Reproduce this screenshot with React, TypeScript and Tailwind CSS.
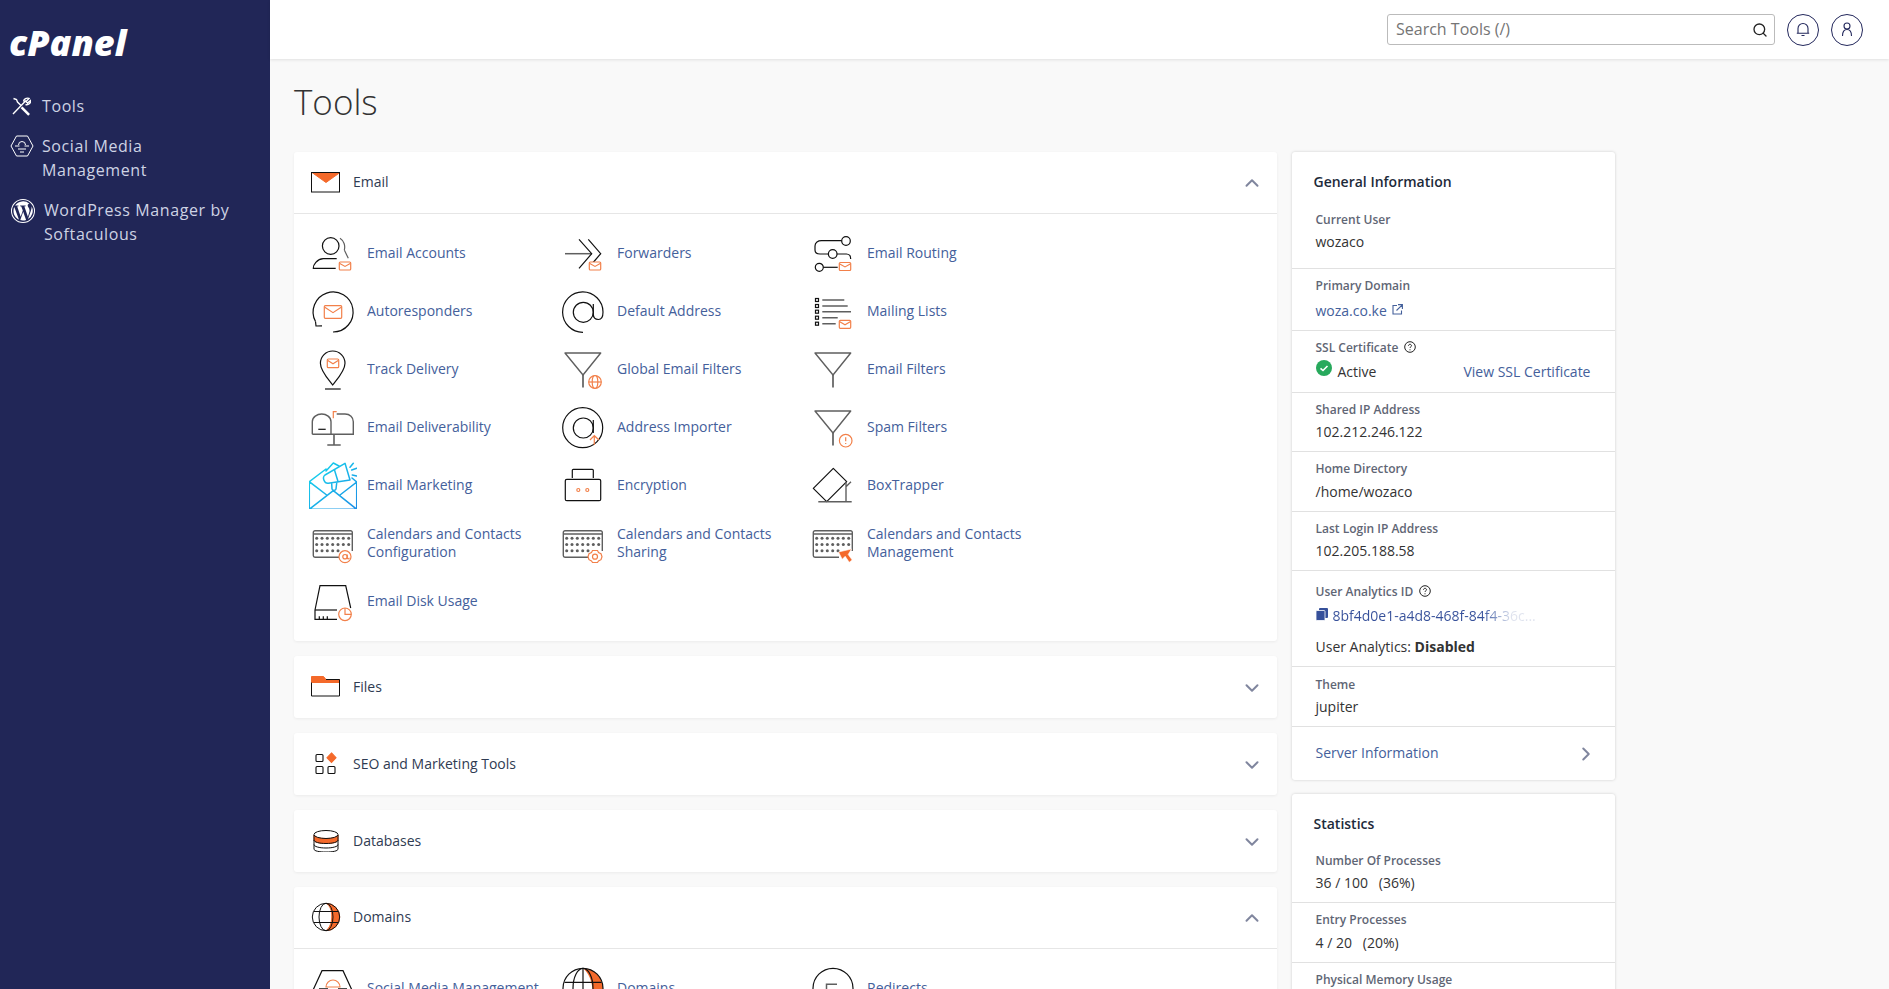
import React from 'react';
import { ChevronDown, ChevronRight, ChevronUp, Search } from 'lucide-react';

const INK = '#111111';
const GREY = '#5f5f5f';
const ORANGE = '#f2804a';
const SOLID = '#f4692a';

// little envelope that sits on the bottom right corner of a lot of the icons
const MiniMail = ({ x = 30.3, y = 33, w = 11.4, h = 8 }: { x?: number; y?: number; w?: number; h?: number }) => (
  <g fill="none" stroke={ORANGE} strokeWidth="1.2">
    <rect x={x} y={y} width={w} height={h} rx="1" fill="#fff" />
    <path d={`M${x + 0.5} ${y + 1.5}L${x + w / 2} ${y + h * 0.55}L${x + w - 0.5} ${y + 1.5}`} />
  </g>
);

const Svg = ({ children }: { children: React.ReactNode }) => (
  <svg width="48" height="48" viewBox="0 0 48 48" fill="none" stroke={INK} strokeWidth="1.2">
    {children}
  </svg>
);

const Funnel = () => (
  <>
    <path d="M6 8h35.7L24 30z" strokeLinejoin="round" stroke={GREY} strokeWidth="1.4" />
    <path d="M24 30v12.5" stroke={GREY} strokeWidth="1.7" />
  </>
);

const Calendar = () => {
  const dots: React.ReactNode[] = [];
  const ys = [19.3, 25.5, 31.7];
  const xs = [7.7, 13, 18.3, 23.7, 29, 34.3, 39.7];
  ys.forEach((y, r) =>
    xs.forEach((x, c) => {
      if (r === 2 && c > 4) return;
      dots.push(<circle key={`${r}-${c}`} cx={x} cy={y} r="1.5" fill={GREY} stroke="none" />);
    }),
  );
  return (
    <>
      <path d="M30 38.3H6a1.7 1.7 0 0 1-1.7-1.7V13.4A1.7 1.7 0 0 1 6 11.7h35.6a1.7 1.7 0 0 1 1.7 1.7V32" stroke={GREY} strokeWidth="1.4" />
      <path d="M4.3 15h39" stroke={GREY} strokeWidth="1.4" />
      {dots}
    </>
  );
};

const icons: Record<string, React.ReactNode> = {
  accounts: (
    <Svg>
      <circle cx="21.7" cy="17" r="8.3" />
      <path d="M31 9.3c4 2.5 5.5 7.5 4.3 11.7M35.3 21l4 8.3" stroke={GREY} />
      <path d="M27.7 29.7H14.3C8 30 4 36 4.3 39.3h22.4" />
      <MiniMail />
    </Svg>
  ),
  forwarders: (
    <Svg>
      <path d="M6 24.7h26.7" stroke={GREY} strokeWidth="1.5" />
      <path d="M20 39.3l12.7-14.6L20 10.3M29.3 10.3l12.4 14.4-8 9.3" />
      <MiniMail />
    </Svg>
  ),
  routing: (
    <Svg>
      <circle cx="37" cy="12" r="4.3" />
      <path d="M32.7 11.7H12.5C9 11.7 6 13.5 6 17v4c0 2.5 2 4 5 4h8.4" />
      <circle cx="23.7" cy="25" r="4.3" />
      <path d="M28 25h9.5c2.5 0 4.2 2 4.2 5" />
      <circle cx="10.3" cy="38.3" r="4" />
      <path d="M14.3 38.3h14.4" />
      <MiniMail y={33.5} />
    </Svg>
  ),
  autoresponders: (
    <Svg>
      <path d="M6.5 34.5A20 20 0 1 1 24 45" />
      <path d="M6.5 34.5l.5 4.5 6-.2" />
      <MiniMail x={15.3} y={18.7} w={17.4} h={12.6} />
    </Svg>
  ),
  defaultAddress: (
    <Svg>
      <circle cx="24.3" cy="25.3" r="10" />
      <path d="M24 45.3A20.2 20.2 0 1 1 44 25c0 2.5 0 7.5-4.5 7.5-3.5 0-5.2-2-5.2-5.5v-10" />
    </Svg>
  ),
  track: (
    <Svg>
      <path d="M23.7 40C19 34 11.4 26 11.4 18.3a12.3 12.3 0 0 1 24.6 0C36 26 28.4 34 23.7 40z" />
      <path d="M16 44h15.7" />
      <MiniMail x={18.3} y={14} w={11.4} h={8.7} />
    </Svg>
  ),
  global: (
    <Svg>
      <Funnel />
      <g stroke={ORANGE} fill="#fff">
        <circle cx="36" cy="37" r="6.3" />
        <ellipse cx="36" cy="37" rx="2.8" ry="6.3" />
        <path d="M29.7 37h12.6" />
      </g>
    </Svg>
  ),
  deliverability: (
    <Svg>
      <path d="M3.3 31.3V18.7C3.3 14 8 11 12.7 11S22 14 22 18.7v12.6M27.7 11H36c5 0 8.3 3.5 8.3 7.7v12.6H3.3" stroke={GREY} strokeWidth="1.4" />
      <path d="M9.3 26.3h7.4" />
      <path d="M25 31.3V42M18.3 42h13.4" stroke={GREY} strokeWidth="1.6" />
      <path d="M24.3 15.3V8.7h3.4" stroke={ORANGE} />
    </Svg>
  ),
  importer: (
    <Svg>
      <circle cx="23.7" cy="24.7" r="20" />
      <circle cx="24.3" cy="25" r="10" />
      <path d="M34.3 17v13" />
      <path d="M35.3 42v-9M31 37l4.3-4.3 4.7 4.3" stroke={ORANGE} fill="none" />
    </Svg>
  ),
  marketing: (
    <svg width="48" height="48" viewBox="0 0 48 48" fill="none" strokeWidth="1.5" strokeLinejoin="round" strokeLinecap="round">
      <defs>
        <linearGradient id="mkt" gradientUnits="userSpaceOnUse" x1="4" y1="4" x2="44" y2="48">
          <stop offset="0" stopColor="#16d6ec" />
          <stop offset="1" stopColor="#1b8fe6" />
        </linearGradient>
      </defs>
      <g stroke="url(#mkt)">
        <path d="M17 10L24.3 2 30 5M47.7 21v27.3H.3V20.7L17 8M.3 48.3l24-18.6 23.4 18.6M.3 20.7L17.7 34M47.7 21L31 34M47.7 21L43 17" />
        <path d="M16 14L36 2.3 41 19l-21.7 3.3c-4 .5-6.5-5.8-3.3-8.3z" />
        <path d="M22.7 22.7l.3 5.3c.2 1.8 3.8 1.8 4 0l.7-6" />
        <path d="M41 6.3l3.3-4M42.7 9l5-1.7M43.3 14l4.4 1" />
        <path d="M25.5 9L29 20.5" />
      </g>
    </svg>
  ),
  encryption: (
    <Svg>
      <path d="M13.3 17V9.3a1 1 0 0 1 1-1h19a1 1 0 0 1 1 1V17" />
      <rect x="6.3" y="18.3" width="35.4" height="21.4" rx="1.5" />
      <circle cx="19.3" cy="29" r="1.5" stroke={ORANGE} />
      <circle cx="28.3" cy="29" r="1.5" stroke={ORANGE} />
    </Svg>
  ),
  calConfig: (
    <Svg>
      <Calendar />
      <circle cx="36" cy="37.7" r="6" stroke={ORANGE} fill="#fff" />
      <circle cx="36" cy="37.7" r="2.2" stroke={ORANGE} />
      <path d="M38.2 35.5v3.2c0 1.5 2 1.5 2 0" stroke={ORANGE} />
    </Svg>
  ),
  calShare: (
    <Svg>
      <Calendar />
      <path d="M33.5 31.5h5l1 2 2.5 1.2 1 3-1 3-2.5 1.3-1 1.5h-5l-1-1.5L30 40.7l-1-3 1-3 2.5-1.2z" stroke={ORANGE} fill="#fff" />
      <circle cx="36" cy="37.7" r="2.5" stroke={ORANGE} />
    </Svg>
  ),
  calManage: (
    <Svg>
      <Calendar />
      <path d="M29.5 33l13-3-3.3 5.5 4 5.5-3 2.3-4-6-3 3z" fill={SOLID} stroke="#fff" strokeWidth=".6" />
    </Svg>
  ),
  disk: (
    <Svg>
      <path d="M28 42.3H6V33L11 8.7h25.7L41.7 31" />
      <path d="M6 33h22" />
      <path d="M10.3 42.3v-3M14.3 42.3v-3M18.3 42.3v-3" />
      <circle cx="36" cy="37.3" r="6.3" stroke={ORANGE} fill="#fff" />
      <path d="M36 31v6.3h6.3" stroke={ORANGE} />
    </Svg>
  ),
  mailing: (
    <Svg>
      {[13, 19, 24.7, 30.7, 36.7].map((y) => (
        <rect key={y} x="6.5" y={y - 1.5} width="3" height="3" />
      ))}
      <path d="M13.3 13h22M13.3 19h25.4M13.3 24.7H42M13.3 30.7h15.4M13.3 36.7h13.4" stroke={GREY} strokeWidth="1.5" />
      <MiniMail y={33.3} />
    </Svg>
  ),
  filters: (
    <Svg>
      <Funnel />
    </Svg>
  ),
  spam: (
    <Svg>
      <Funnel />
      <circle cx="36.7" cy="37.7" r="6.3" stroke={ORANGE} fill="#fff" />
      <path d="M36.7 34.3v4M36.7 40v1" stroke={ORANGE} />
    </Svg>
  ),
  boxtrapper: (
    <Svg>
      <path d="M24.3 7.3l13.4 13.4-20 20L4.3 27.3z" strokeLinejoin="round" />
      <path d="M37 20.7v20M9.3 40.7h33.4M37 25.7l5-5" stroke={GREY} strokeWidth="1.4" />
    </Svg>
  ),
  social: (
    <Svg>
      <path d="M-1 37L13 6.7h21L48 37" />
      <path d="M17 23a7 7 0 0 1 14 0z" stroke={ORANGE} />
      <path d="M10 25h9M29 25h9" strokeWidth="1.5" />
    </Svg>
  ),
  domainsTool: (
    <Svg>
      <path d="M24 4.3a20 20 0 0 1 20 20v10H33.5c1-12-2-24-9.5-30z" fill={SOLID} stroke="none" />
      <circle cx="24" cy="24.3" r="20" />
      <ellipse cx="24" cy="24.3" rx="10" ry="20" />
      <path d="M5.5 18.3h37M24 4.3v40" />
    </Svg>
  ),
  redirects: (
    <Svg>
      <circle cx="24" cy="24.3" r="20" />
      <path d="M28 20.3H17.5V30" stroke={GREY} strokeWidth="1.5" />
    </Svg>
  ),
};

const sectionIcons: Record<string, React.ReactNode> = {
  email: (
    <svg width="30" height="22" viewBox="0 0 30 22" fill="none" stroke="#111" strokeWidth="1">
      <path d="M1 1.5h28L15 11.5z" fill={SOLID} stroke={SOLID} />
      <rect x=".5" y="1.5" width="28" height="19.5" />
    </svg>
  ),
  files: (
    <svg width="30" height="22" viewBox="0 0 30 22" fill="none" stroke="#111" strokeWidth="1">
      <path d="M.5 1.5h12l2.5 3h13.5v3H.5z" fill={SOLID} stroke={SOLID} />
      <path d="M.5 7.5V21h28V4.5H15" />
    </svg>
  ),
  seo: (
    <svg width="30" height="24" viewBox="0 0 30 24" fill="none" stroke="#111" strokeWidth="1.1">
      <rect x="5" y="3.5" width="7" height="7" rx="1" />
      <rect x="5" y="15.5" width="7" height="7" rx="1" />
      <rect x="17" y="15.5" width="7" height="7" rx="1" />
      <path d="M20.5 2l4.5 4.7-4.5 4.7L16 6.7z" fill={SOLID} stroke={SOLID} />
    </svg>
  ),
  databases: (
    <svg width="30" height="24" viewBox="0 0 30 24" fill="none" stroke="#111" strokeWidth="1">
      <path d="M3 7v5c0 2 5 3.5 12 3.5S27 14 27 12V7c0 2-5 3.5-12 3.5S3 9 3 7z" fill={SOLID} stroke={SOLID} />
      <ellipse cx="15" cy="6.5" rx="12" ry="4" />
      <path d="M3 7v14c0 2 5 3 12 3s12-1 12-3V7M3 12c0 2 5 3.5 12 3.5S27 14 27 12M3 16.5c0 2 5 3.5 12 3.5s12-1.5 12-3.5" />
    </svg>
  ),
  domains: (
    <svg width="30" height="30" viewBox="0 0 30 30" fill="none" stroke="#111" strokeWidth="1">
      <path d="M15 1.3a13.7 13.7 0 0 1 0 27.4C22 24 23.5 6 15 1.3z" fill={SOLID} stroke={SOLID} />
      <circle cx="15" cy="15" r="13.7" />
      <ellipse cx="15" cy="15" rx="7" ry="13.7" />
      <path d="M3 9.5h24M3 20.5h24" />
    </svg>
  ),
};

type Tool = { label: string; icon: string };

const emailTools: Tool[] = [
  { label: 'Email Accounts', icon: 'accounts' },
  { label: 'Forwarders', icon: 'forwarders' },
  { label: 'Email Routing', icon: 'routing' },
  { label: 'Autoresponders', icon: 'autoresponders' },
  { label: 'Default Address', icon: 'defaultAddress' },
  { label: 'Mailing Lists', icon: 'mailing' },
  { label: 'Track Delivery', icon: 'track' },
  { label: 'Global Email Filters', icon: 'global' },
  { label: 'Email Filters', icon: 'filters' },
  { label: 'Email Deliverability', icon: 'deliverability' },
  { label: 'Address Importer', icon: 'importer' },
  { label: 'Spam Filters', icon: 'spam' },
  { label: 'Email Marketing', icon: 'marketing' },
  { label: 'Encryption', icon: 'encryption' },
  { label: 'BoxTrapper', icon: 'boxtrapper' },
  { label: 'Calendars and Contacts Configuration', icon: 'calConfig' },
  { label: 'Calendars and Contacts Sharing', icon: 'calShare' },
  { label: 'Calendars and Contacts Management', icon: 'calManage' },
  { label: 'Email Disk Usage', icon: 'disk' },
];

const domainTools: Tool[] = [
  { label: 'Social Media Management', icon: 'social' },
  { label: 'Domains', icon: 'domainsTool' },
  { label: 'Redirects', icon: 'redirects' },
];

const ToolGrid = ({ tools }: { tools: Tool[] }) => (
  <div className="grid grid-cols-[repeat(3,250px)] pt-[10px] pb-[11px] pl-[15px]">
    {tools.map((t) => (
      <a key={t.label} className="flex h-[58px] items-center gap-[10px] text-[14px] leading-[18px] text-[#44609b]">
        <span className="h-[48px] w-[48px] shrink-0">{icons[t.icon]}</span>
        <span className="w-[180px]">{t.label}</span>
      </a>
    ))}
  </div>
);

const Section = ({ label, icon, open, children }: { label: string; icon: string; open?: boolean; children?: React.ReactNode }) => (
  <section className="rounded-[3px] bg-white shadow-[0_1px_3px_rgba(0,0,0,0.06)]">
    <div className={`flex h-[62px] items-center pr-[14px] pb-[2px] pl-[17px] ${open ? 'border-b border-[#e6e6e6]' : ''}`}>
      <span className="flex w-[42px] items-center">{sectionIcons[icon]}</span>
      <span className="text-[14px] text-[#2f3b52]">{label}</span>
      <span className="mt-[3px] ml-auto text-[#80869e]">
        {open ? <ChevronUp size={22} strokeWidth={2.2} /> : <ChevronDown size={22} strokeWidth={2.2} />}
      </span>
    </div>
    {children}
  </section>
);

const Help = () => (
  <svg className="ml-[6px] inline-block -translate-y-[2px]" width="12" height="12" viewBox="0 0 12 12" fill="none" stroke="#222" strokeWidth="1">
    <circle cx="6" cy="6" r="5.3" />
    <path d="M4.5 4.8c0-2 3-2 3 0 0 1-1.5 1-1.5 2.2M6 8.3v1" />
  </svg>
);

const Row = ({ label, help, h, children }: { label: string; help?: boolean; h: string; children: React.ReactNode }) => (
  <div className={`border-b border-[#e1e1e1] px-[24px] ${h}`}>
    <div className="text-[12px] leading-[16px] font-semibold text-[#5f6675]">
      {label}
      {help && <Help />}
    </div>
    {children}
  </div>
);

const Value = ({ far, children }: { far?: boolean; children: React.ReactNode }) => (
  <div className={`${far ? 'mt-[5px]' : 'mt-[4px]'} text-[14px] leading-[20px] text-[#333]`}>{children}</div>
);

export default function App() {
  return (
    <div className="flex h-screen overflow-hidden bg-[#f9f9f9] font-['Open_Sans',sans-serif]">
      <aside className="w-[270px] shrink-0 bg-[#212657] text-[16px] leading-[24px] tracking-[0.6px] text-[#ced3e4]">
        <div className="pt-[21px] pl-[9px] text-[36px] leading-[44px] font-extrabold tracking-[0px] text-white italic">cPanel</div>
        <nav className="mt-[29px]">
          <a className="flex h-[24px] items-center pl-[11px]">
            <svg width="20" height="20" viewBox="0 0 20 20" fill="none" stroke="#fff" strokeWidth="1.4">
              <path d="M2 18L15 4.5M12.5 5.5c.5-2.5 3-4 5.5-3l-3 3 1.5 1.5 3-2.5c.5 2.5-2 5-5 4" />
              <path d="M2.5 2.5l3 1 1 2.5 3.5 3.5M11 11l7 7-.8.8-7-7" />
            </svg>
            <span className="ml-[11px]">Tools</span>
          </a>
          <a className="mt-[16px] flex pl-[10px]">
            <svg className="mt-[1px] shrink-0" width="24" height="22" viewBox="0 0 24 22" fill="none" stroke="#fff" strokeWidth="1">
              <path d="M6.5 1h11L23 11l-5.5 10h-11L1 11z" />
              <path d="M8.5 10a3.5 3.5 0 0 1 7 0M5 11h4.5M14.5 11H19M8 14h8M10 17h4" />
            </svg>
            <span className="ml-[8px] w-[160px]">Social Media Management</span>
          </a>
          <a className="mt-[16px] flex pl-[11px]">
            <svg className="mt-[1px] shrink-0" width="24" height="24" viewBox="0 0 24 24" fill="#fff">
              <path fillRule="evenodd" d="M12 0a12 12 0 1 1 0 24 12 12 0 0 1 0-24zm0 1A11 11 0 1 0 12 23 11 11 0 0 0 12 1zM2.5 12c0 3.8 2.2 7 5.4 8.6L3.3 8.1A9.5 9.5 0 0 0 2.5 12zm16-.6c0-1.2-.4-2-.8-2.6-.5-.8-1-1.500-1-2.300 0-.9.7-1.700 1.600-1.700h.1A9.500 9.500 0 0 0 4.100 6.600h.6c1 0 2.500-.1 2.500-.1.500 0 .6.700.1.800 0 0-.5.100-1.100.1l3.500 10.400 2.100-6.300-1.500-4.100c-.5 0-1-.1-1-.1-.5 0-.4-.8.1-.8 0 0 1.600.1 2.500.1 1 0 2.500-.1 2.500-.1.500 0 .6.700.1.800 0 0-.5.100-1.100.1l3.500 10.300 1-3.200c.4-1.300.7-2.200.7-3zm-6.300 1.300l-2.900 8.400a9.500 9.500 0 0 0 5.800-.2l-.1-.1zm8.300-5.500c0 .3.1.7.1 1 0 1-.2 2.100-.7 3.500l-2.900 8.400A9.500 9.500 0 0 0 20.500 7.200z" />
            </svg>
            <span className="ml-[9px] w-[200px]">WordPress Manager by Softaculous</span>
          </a>
        </nav>
      </aside>

      <div className="flex min-w-0 flex-1 flex-col">
        <header className="flex h-[59px] shrink-0 items-center bg-white pr-[26px] shadow-[0_1px_3px_rgba(0,0,0,0.1)]">
          <div className="ml-auto flex h-[31px] w-[388px] items-center rounded-[3px] border border-[#bbb] pr-[6px] pl-[8px]">
            <span className="pb-[2px] text-[16px] text-[#757575]">Search Tools (/)</span>
            <Search className="ml-auto text-[#222]" size={16} strokeWidth={2} />
          </div>
          <button className="ml-[12px] flex h-[32px] w-[32px] items-center justify-center rounded-full border border-[#23285c] text-[#23285c]">
            <svg width="14" height="15" viewBox="0 0 14 15" fill="none" stroke="currentColor" strokeWidth="1.1">
              <path d="M2 11V6.5a5 5 0 0 1 10 0V11M.8 11.3h12.4M5.5 13.5h3" />
            </svg>
          </button>
          <button className="ml-[12px] flex h-[32px] w-[32px] items-center justify-center rounded-full border border-[#23285c] text-[#23285c]">
            <svg width="14" height="15" viewBox="0 0 14 15" fill="none" stroke="currentColor" strokeWidth="1.1">
              <circle cx="7" cy="4" r="3" />
              <path d="M2.5 14c0-5 2-6.5 4.5-6.5s4.5 1.5 4.5 6.5" />
            </svg>
          </button>
        </header>

        <main className="flex min-h-0 flex-1 items-start gap-[14.5px] overflow-hidden pt-[10px] pl-[24px]">
          <div className="w-[983px] shrink-0">
            <h1 className="h-[83px] pt-[8px] text-[35px] leading-[50px] font-light text-[#333]">Tools</h1>
            <div className="flex flex-col gap-[15px]">
              <Section label="Email" icon="email" open>
                <ToolGrid tools={emailTools} />
              </Section>
              <Section label="Files" icon="files" />
              <Section label="SEO and Marketing Tools" icon="seo" />
              <Section label="Databases" icon="databases" />
              <Section label="Domains" icon="domains" open>
                <ToolGrid tools={domainTools} />
              </Section>
            </div>
          </div>

          <div className="mt-[83px] flex w-[323px] shrink-0 flex-col gap-[14px]">
            <div className="rounded-[3px] bg-white shadow-[0_0_3px_rgba(0,0,0,0.18)]">
              <h2 className="h-[59px] px-[22px] pt-[20px] text-[14px] leading-[20px] font-semibold text-[#1d2a3a]">General Information</h2>
              <Row label="Current User" h="h-[58px] pt-[1px]">
                <Value>wozaco</Value>
              </Row>
              <Row label="Primary Domain" h="h-[62px] pt-[9px]">
                <a className="mt-[7px] flex items-center text-[14px] leading-[20px] text-[#44609b]">
                  woza.co.ke
                  <svg className="mb-[3px] ml-[5px]" width="11" height="11" viewBox="0 0 11 11" fill="none" stroke="currentColor" strokeWidth="1.1">
                    <path d="M5 1.5H1V10h8.5V6.5M6 .6h4.400V5M10.300.8L4.500 6.500" />
                  </svg>
                </a>
              </Row>
              <Row label="SSL Certificate" help h="h-[62px] pt-[9px]">
                <div className="mt-[6px] flex items-center text-[14px] leading-[20px]">
                  <svg className="-translate-y-[4px]" width="16" height="16" viewBox="0 0 16 16">
                    <circle cx="8" cy="8" r="8" fill="#27a95c" />
                    <path d="M4.5 8.3L7 10.5 11.5 6" fill="none" stroke="#fff" strokeWidth="1.6" />
                  </svg>
                  <span className="ml-[6px] text-[#333]">Active</span>
                  <a className="ml-auto text-[#44609b]">View SSL Certificate</a>
                </div>
              </Row>
              <Row label="Shared IP Address" h="h-[59px] pt-[9px]">
                <Value>102.212.246.122</Value>
              </Row>
              <Row label="Home Directory" h="h-[60px] pt-[9px]">
                <Value far>/home/wozaco</Value>
              </Row>
              <Row label="Last Login IP Address" h="h-[59px] pt-[9px]">
                <Value>102.205.188.58</Value>
              </Row>
              <Row label="User Analytics ID" help h="h-[96px] pt-[13px]">
                <div className="mt-[6px] flex items-center text-[14px] leading-[20px] text-[#36509a]">
                  <svg className="mb-[3px]" width="12" height="13" viewBox="0 0 12 13" fill="#36509a">
                    <rect x="3" y="0" width="9" height="10" rx="1" />
                    <rect x="0" y="2.5" width="9" height="10" rx="1" stroke="#fff" strokeWidth=".8" />
                  </svg>
                  <span className="ml-[5px] bg-gradient-to-r from-[#36509a] from-[73%] to-[#dfe3ee] to-[88%] bg-clip-text text-transparent">
                    8bf4d0e1-a4d8-468f-84f4-36c...
                  </span>
                </div>
                <div className="mt-[11px] text-[14px] leading-[20px] text-[#333]">
                  User Analytics: <b className="font-bold">Disabled</b>
                </div>
              </Row>
              <Row label="Theme" h="h-[60px] pt-[10px]">
                <Value>jupiter</Value>
              </Row>
              <a className="flex h-[53px] items-center justify-between pr-[18px] pl-[24px] text-[14px] text-[#44609b]">
                <span className="pb-[3px]">Server Information</span>
                <ChevronRight className="text-[#80869e]" size={22} strokeWidth={2.2} />
              </a>
            </div>

            <div className="rounded-[3px] bg-white shadow-[0_0_3px_rgba(0,0,0,0.18)]">
              <h2 className="h-[59px] px-[22px] pt-[20px] text-[14px] leading-[20px] font-semibold text-[#1d2a3a]">Statistics</h2>
              <Row label="Number Of Processes" h="h-[50px]">
                <Value>36 / 100 &nbsp; (36%)</Value>
              </Row>
              <Row label="Entry Processes" h="h-[60px] pt-[9px]">
                <Value far>4 / 20 &nbsp; (20%)</Value>
              </Row>
              <Row label="Physical Memory Usage" h="h-[60px] pt-[9px]">
                <Value>0 bytes</Value>
              </Row>
            </div>
          </div>
        </main>
      </div>
    </div>
  );
}
